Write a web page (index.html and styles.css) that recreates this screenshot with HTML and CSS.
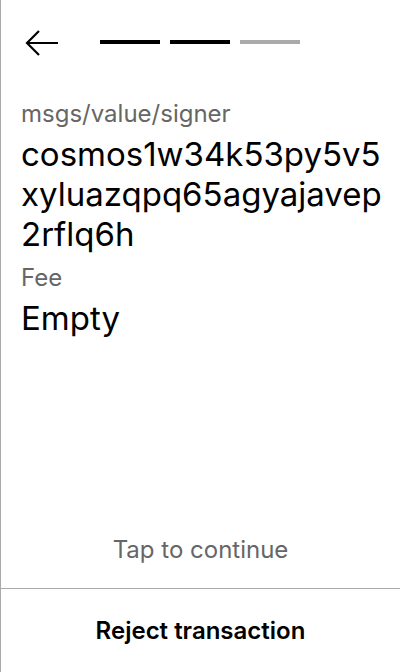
FILE: index.html
```html
<!DOCTYPE html>
<html>
<head>
<meta charset="utf-8">
<link rel="stylesheet" href="styles.css">
</head>
<body>
<div class="screen">
  <div class="header">
    <svg class="back" width="34" height="28" viewBox="0 0 34 28">
      <path d="M15 2 L3 14 L15 26 M3 14 H34" fill="none" stroke="#000" stroke-width="2.2"/>
    </svg>
    <div class="steps">
      <span class="step done"></span>
      <span class="step done"></span>
      <span class="step"></span>
    </div>
  </div>
  <div class="content">
    <div class="label">msgs/value/signer</div>
    <div class="value">cosmos1w34k53py5v5xyluazqpq65agyajavep2rflq6h</div>
    <div class="label">Fee</div>
    <div class="value">Empty</div>
  </div>
  <div class="tap">Tap to continue</div>
  <div class="footer">Reject transaction</div>
</div>
</body>
</html>
```
FILE: styles.css
```css
html, body {
  margin: 0;
  padding: 0;
  background: #fff;
}
body {
  font-family: Inter, "Noto Sans", sans-serif;
  color: #000;
}
.screen {
  height: 672px;
  box-sizing: border-box;
  border-left: 1px solid #aaa;
  display: flex;
  flex-direction: column;
}
.header {
  display: flex;
  align-items: center;
  padding: 29px 0 0 23px;
  height: 28px;
}
.back {
  display: block;
}
.steps {
  display: flex;
  gap: 10px;
  margin-left: 42px;
  margin-top: -3px;
}
.step {
  display: block;
  width: 60px;
  height: 4px;
  background: #aaa;
}
.step.done {
  background: #000;
}
.content {
  padding: 42px 14px 0 20px;
  flex: 1;
}
.label {
  font-size: 24px;
  line-height: 30px;
  color: #666;
  margin-bottom: 5px;
}
.value {
  font-size: 33px;
  line-height: 40px;
  word-break: break-all;
  margin-bottom: 9px;
}
.tap {
  text-align: center;
  font-size: 24px;
  color: #666;
  line-height: 29px;
  padding-bottom: 24px;
}
.footer {
  border-top: 1px solid #aaa;
  height: 83px;
  display: flex;
  align-items: center;
  justify-content: center;
  font-size: 24px;
  font-weight: 600;
}
```
